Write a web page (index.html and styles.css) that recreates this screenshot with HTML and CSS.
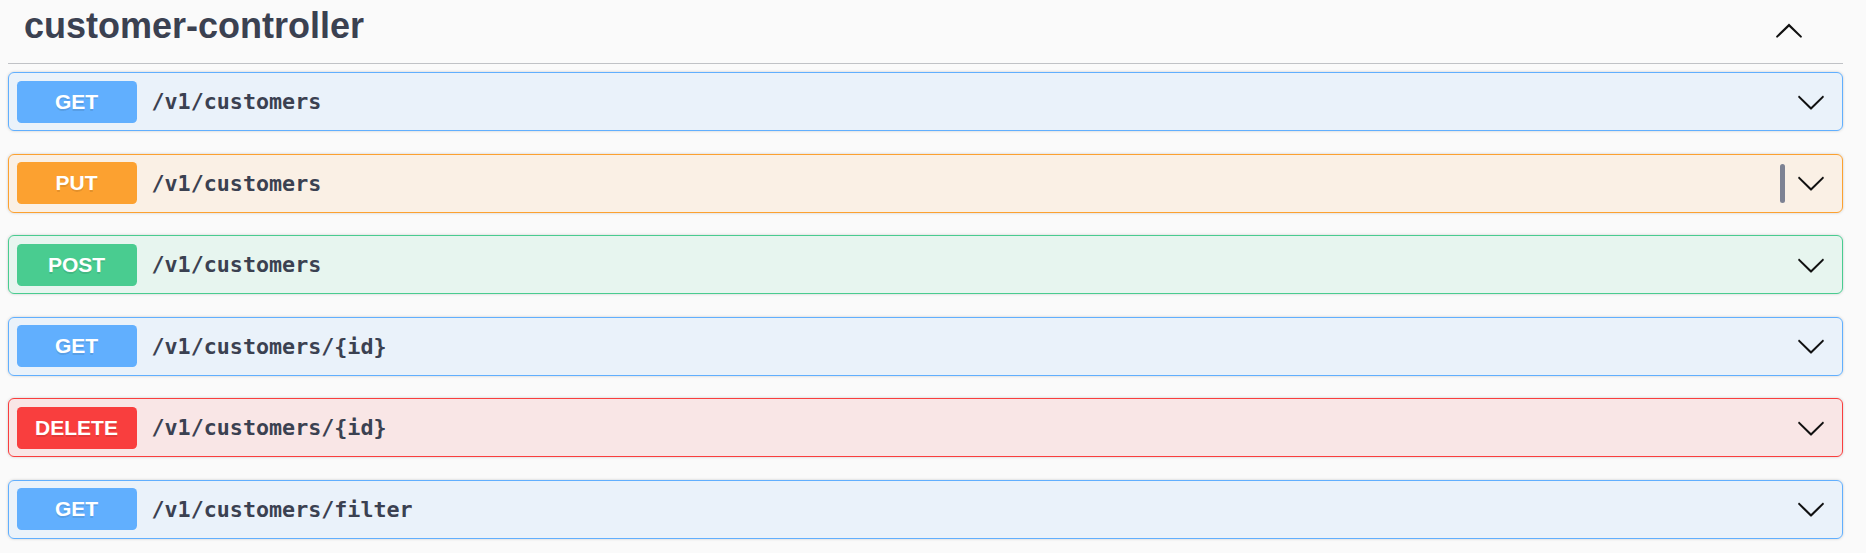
FILE: index.html
```html
<!DOCTYPE html>
<html lang="en">
<head>
<meta charset="utf-8">
<title>customer-controller</title>
<link rel="stylesheet" href="styles.css">
</head>
<body>
<div class="wrap">
  <div class="tag">
    <h3 class="tag-title">customer-controller</h3>
    <button class="toggle" aria-label="Collapse">
      <svg viewBox="0 0 20 20" width="30" height="30"><path d="M17.418 14.908c.272.268.709.268.979 0s.27-.701 0-.969l-7.908-7.83c-.27-.268-.707-.268-.979 0l-7.908 7.83c-.27.268-.27.701 0 .969.271.268.709.268.979 0L10 7.767l7.418 7.141z"/></svg>
    </button>
  </div>
  <div class="ops">
    <div class="op op-get">
      <span class="method">GET</span>
      <span class="path">/v1/customers</span>
      <svg class="arrow" viewBox="0 0 20 20" width="30" height="30"><path d="M17.418 6.109c.272-.268.709-.268.979 0s.271.701 0 .969l-7.908 7.83c-.27.268-.707.268-.979 0l-7.908-7.83c-.27-.268-.27-.701 0-.969.271-.268.709-.268.979 0L10 13.25l7.418-7.141z"/></svg>
    </div>
    <div class="op op-put">
      <span class="method">PUT</span>
      <span class="path">/v1/customers</span>
      <span class="grip"></span>
      <svg class="arrow" viewBox="0 0 20 20" width="30" height="30"><path d="M17.418 6.109c.272-.268.709-.268.979 0s.271.701 0 .969l-7.908 7.83c-.27.268-.707.268-.979 0l-7.908-7.83c-.27-.268-.27-.701 0-.969.271-.268.709-.268.979 0L10 13.25l7.418-7.141z"/></svg>
    </div>
    <div class="op op-post">
      <span class="method">POST</span>
      <span class="path">/v1/customers</span>
      <svg class="arrow" viewBox="0 0 20 20" width="30" height="30"><path d="M17.418 6.109c.272-.268.709-.268.979 0s.271.701 0 .969l-7.908 7.83c-.27.268-.707.268-.979 0l-7.908-7.83c-.27-.268-.27-.701 0-.969.271-.268.709-.268.979 0L10 13.25l7.418-7.141z"/></svg>
    </div>
    <div class="op op-get">
      <span class="method">GET</span>
      <span class="path">/v1/customers/{id}</span>
      <svg class="arrow" viewBox="0 0 20 20" width="30" height="30"><path d="M17.418 6.109c.272-.268.709-.268.979 0s.271.701 0 .969l-7.908 7.83c-.27.268-.707.268-.979 0l-7.908-7.83c-.27-.268-.27-.701 0-.969.271-.268.709-.268.979 0L10 13.25l7.418-7.141z"/></svg>
    </div>
    <div class="op op-delete">
      <span class="method">DELETE</span>
      <span class="path">/v1/customers/{id}</span>
      <svg class="arrow" viewBox="0 0 20 20" width="30" height="30"><path d="M17.418 6.109c.272-.268.709-.268.979 0s.271.701 0 .969l-7.908 7.83c-.27.268-.707.268-.979 0l-7.908-7.83c-.27-.268-.27-.701 0-.969.271-.268.709-.268.979 0L10 13.25l7.418-7.141z"/></svg>
    </div>
    <div class="op op-get">
      <span class="method">GET</span>
      <span class="path">/v1/customers/filter</span>
      <svg class="arrow" viewBox="0 0 20 20" width="30" height="30"><path d="M17.418 6.109c.272-.268.709-.268.979 0s.271.701 0 .969l-7.908 7.83c-.27.268-.707.268-.979 0l-7.908-7.83c-.27-.268-.27-.701 0-.969.271-.268.709-.268.979 0L10 13.25l7.418-7.141z"/></svg>
    </div>
  </div>
</div>
</body>
</html>
```
FILE: styles.css
```css
html, body {
  margin: 0;
  padding: 0;
  background: #fafafa;
}
body {
  font-family: "Liberation Sans", Arial, sans-serif;
  color: #3b4151;
}
.wrap {
  padding: 0 23px 0 8px;
}
.tag {
  display: flex;
  align-items: flex-start;
  height: 64px;
  box-sizing: border-box;
  padding: 5px 39px 0 16px;
  border-bottom: 1px solid rgba(59, 65, 81, 0.3);
}
.tag-title {
  flex: 1;
  margin: 0;
  font-size: 36px;
  line-height: 41px;
  font-weight: 700;
  color: #3b4151;
}
.toggle {
  margin-top: 10px;
  padding: 0;
  border: 0;
  background: none;
  width: 30px;
  height: 30px;
}
.toggle svg {
  display: block;
  fill: #111;
}
.ops {
  padding-top: 8px;
}
.op {
  display: flex;
  align-items: center;
  border: 1px solid;
  border-radius: 6px;
  padding: 7.5px 16px 7.5px 7.5px;
  margin-bottom: 22.5px;
  box-shadow: 0 0 3px rgba(0, 0, 0, 0.19);
}
.method {
  min-width: 120px;
  padding: 9px 0;
  line-height: 24px;
  font-size: 21px;
  font-weight: 700;
  text-align: center;
  color: #fff;
  border-radius: 4.5px;
  text-shadow: 0 1.5px 0 rgba(0, 0, 0, 0.1);
}
.path {
  flex: 1;
  padding: 0 15px;
  font-family: "DejaVu Sans Mono", "Liberation Mono", monospace;
  font-weight: 700;
  font-size: 21.7px;
  color: #3b4151;
}
.arrow {
  display: block;
  fill: #111;
}
.grip {
  width: 5px;
  height: 39px;
  border-radius: 3px;
  background: #7d8293;
  margin-right: 11px;
}
.op-get {
  border-color: #61affe;
  background: rgba(97, 175, 254, 0.1);
}
.op-get .method { background: #61affe; }
.op-put {
  border-color: #fca130;
  background: rgba(252, 161, 48, 0.1);
}
.op-put .method { background: #fca130; }
.op-post {
  border-color: #49cc90;
  background: rgba(73, 204, 144, 0.1);
}
.op-post .method { background: #49cc90; }
.op-delete {
  border-color: #f93e3e;
  background: rgba(249, 62, 62, 0.1);
}
.op-delete .method { background: #f93e3e; }
```
